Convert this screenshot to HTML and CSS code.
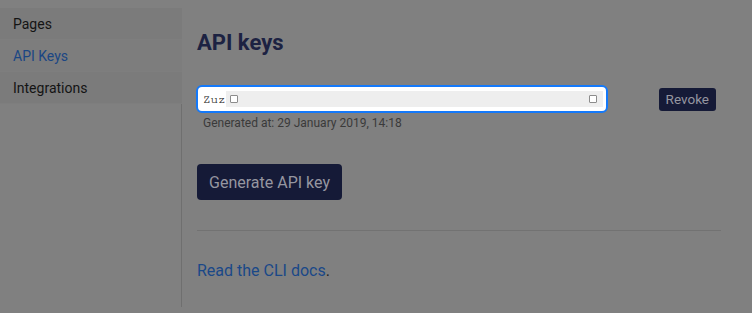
FILE: index.html
```html
<!DOCTYPE html>
<html lang="en">
<head>
<meta charset="utf-8">
<title>API keys</title>
<link rel="stylesheet" href="styles.css">
</head>
<body>
<div class="layout">
  <aside class="sidebar">
    <a class="nav-item">Pages</a>
    <a class="nav-item nav-item--active">API Keys</a>
    <a class="nav-item">Integrations</a>
    <div class="sidebar-rest"></div>
  </aside>
  <main class="main">
    <h1 class="title">API keys</h1>
    <div class="key-row">
      <div class="key-field">
        <span class="key-prefix">Zuz</span>
        <span class="key-mask"><span class="tofu"></span><span class="tofu"></span></span>
      </div>
      <button class="btn btn--small">Revoke</button>
    </div>
    <p class="meta">Generated at: 29 January 2019, 14:18</p>
    <button class="btn btn--large">Generate API key</button>
    <hr class="divider">
    <p class="docs"><a class="link">Read the CLI docs</a>.</p>
  </main>
</div>
</body>
</html>
```

FILE: styles.css
```css
* { box-sizing: border-box; }
html, body { margin: 0; padding: 0; }
body {
  background: #808080;
  font-family: Roboto, "Liberation Sans", sans-serif;
  color: #141414;
  width: 752px;
  height: 313px;
  overflow: hidden;
}
.layout {
  display: flex;
  align-items: flex-start;
}
.sidebar {
  width: 182px;
  height: 307px;
  padding-top: 8px;
  display: flex;
  flex-direction: column;
}
.nav-item {
  display: flex;
  align-items: center;
  height: 32px;
  padding-left: 13px;
  font-size: 14px;
  background: #7b7b7b;
  color: #141414;
  border-bottom: 1px solid #7e7e7e;
}
.nav-item--active {
  color: #1a4684;
  background: #7d7d7d;
}
.sidebar-rest {
  flex: 1;
  border-right: 1px solid #6f6f6f;
}
.main {
  margin-left: 15px;
  width: 524px;
  padding-top: 30px;
  display: flex;
  flex-direction: column;
  align-items: flex-start;
}
.title {
  margin: 0;
  font-size: 22px;
  line-height: 26px;
  font-weight: 700;
  color: #1c2242;
}
.key-row {
  margin-top: 29px;
  width: 100%;
  display: flex;
  align-items: center;
}
.key-field {
  margin-left: -1px;
  width: 412px;
  height: 28px;
  border: 2px solid #1479fa;
  border-radius: 6px;
  background: #ffffff;
  display: flex;
  align-items: center;
  padding-left: 5px;
  padding-right: 3px;
}
.key-prefix {
  font-family: "FreeMono", "Nimbus Mono L", "Nimbus Mono PS", "Courier New", Courier, "Liberation Mono", monospace;
  font-size: 12.5px;
  color: #111;
  -webkit-text-stroke: 0.12px #111;
}
.key-mask {
  flex: 1;
  height: 16px;
  background: #eeeeee;
  display: flex;
  align-items: center;
  justify-content: space-between;
  padding: 0 6px 0 4px;
}
.tofu {
  width: 8px;
  height: 8px;
  border: 1px solid #8c8c8c;
  background: #fff;
  border-radius: 1px;
}
.btn {
  border: none;
  background: #151a37;
  color: #9596a0;
  font-family: Roboto, "Liberation Sans", sans-serif;
  cursor: pointer;
}
.btn--small {
  margin-left: auto;
  margin-right: 5px;
  height: 23px;
  padding: 0 7px;
  font-size: 13.5px;
  border-radius: 3px;
}
.meta {
  margin: 3px 0 0;
  padding-left: 6px;
  font-size: 12px;
  line-height: 14px;
  color: #3a3a3a;
}
.btn--large {
  margin-top: 34px;
  height: 36px;
  width: 145px;
  padding: 0;
  font-size: 16px;
  border-radius: 4px;
}
.divider {
  margin: 30px 0 0;
  width: 524px;
  border: none;
  border-top: 1px solid #727272;
}
.docs {
  margin: 30px 0 0;
  font-size: 16px;
  line-height: 20px;
  color: #222;
}
.link {
  color: #1a4888;
  text-decoration: none;
}
```
